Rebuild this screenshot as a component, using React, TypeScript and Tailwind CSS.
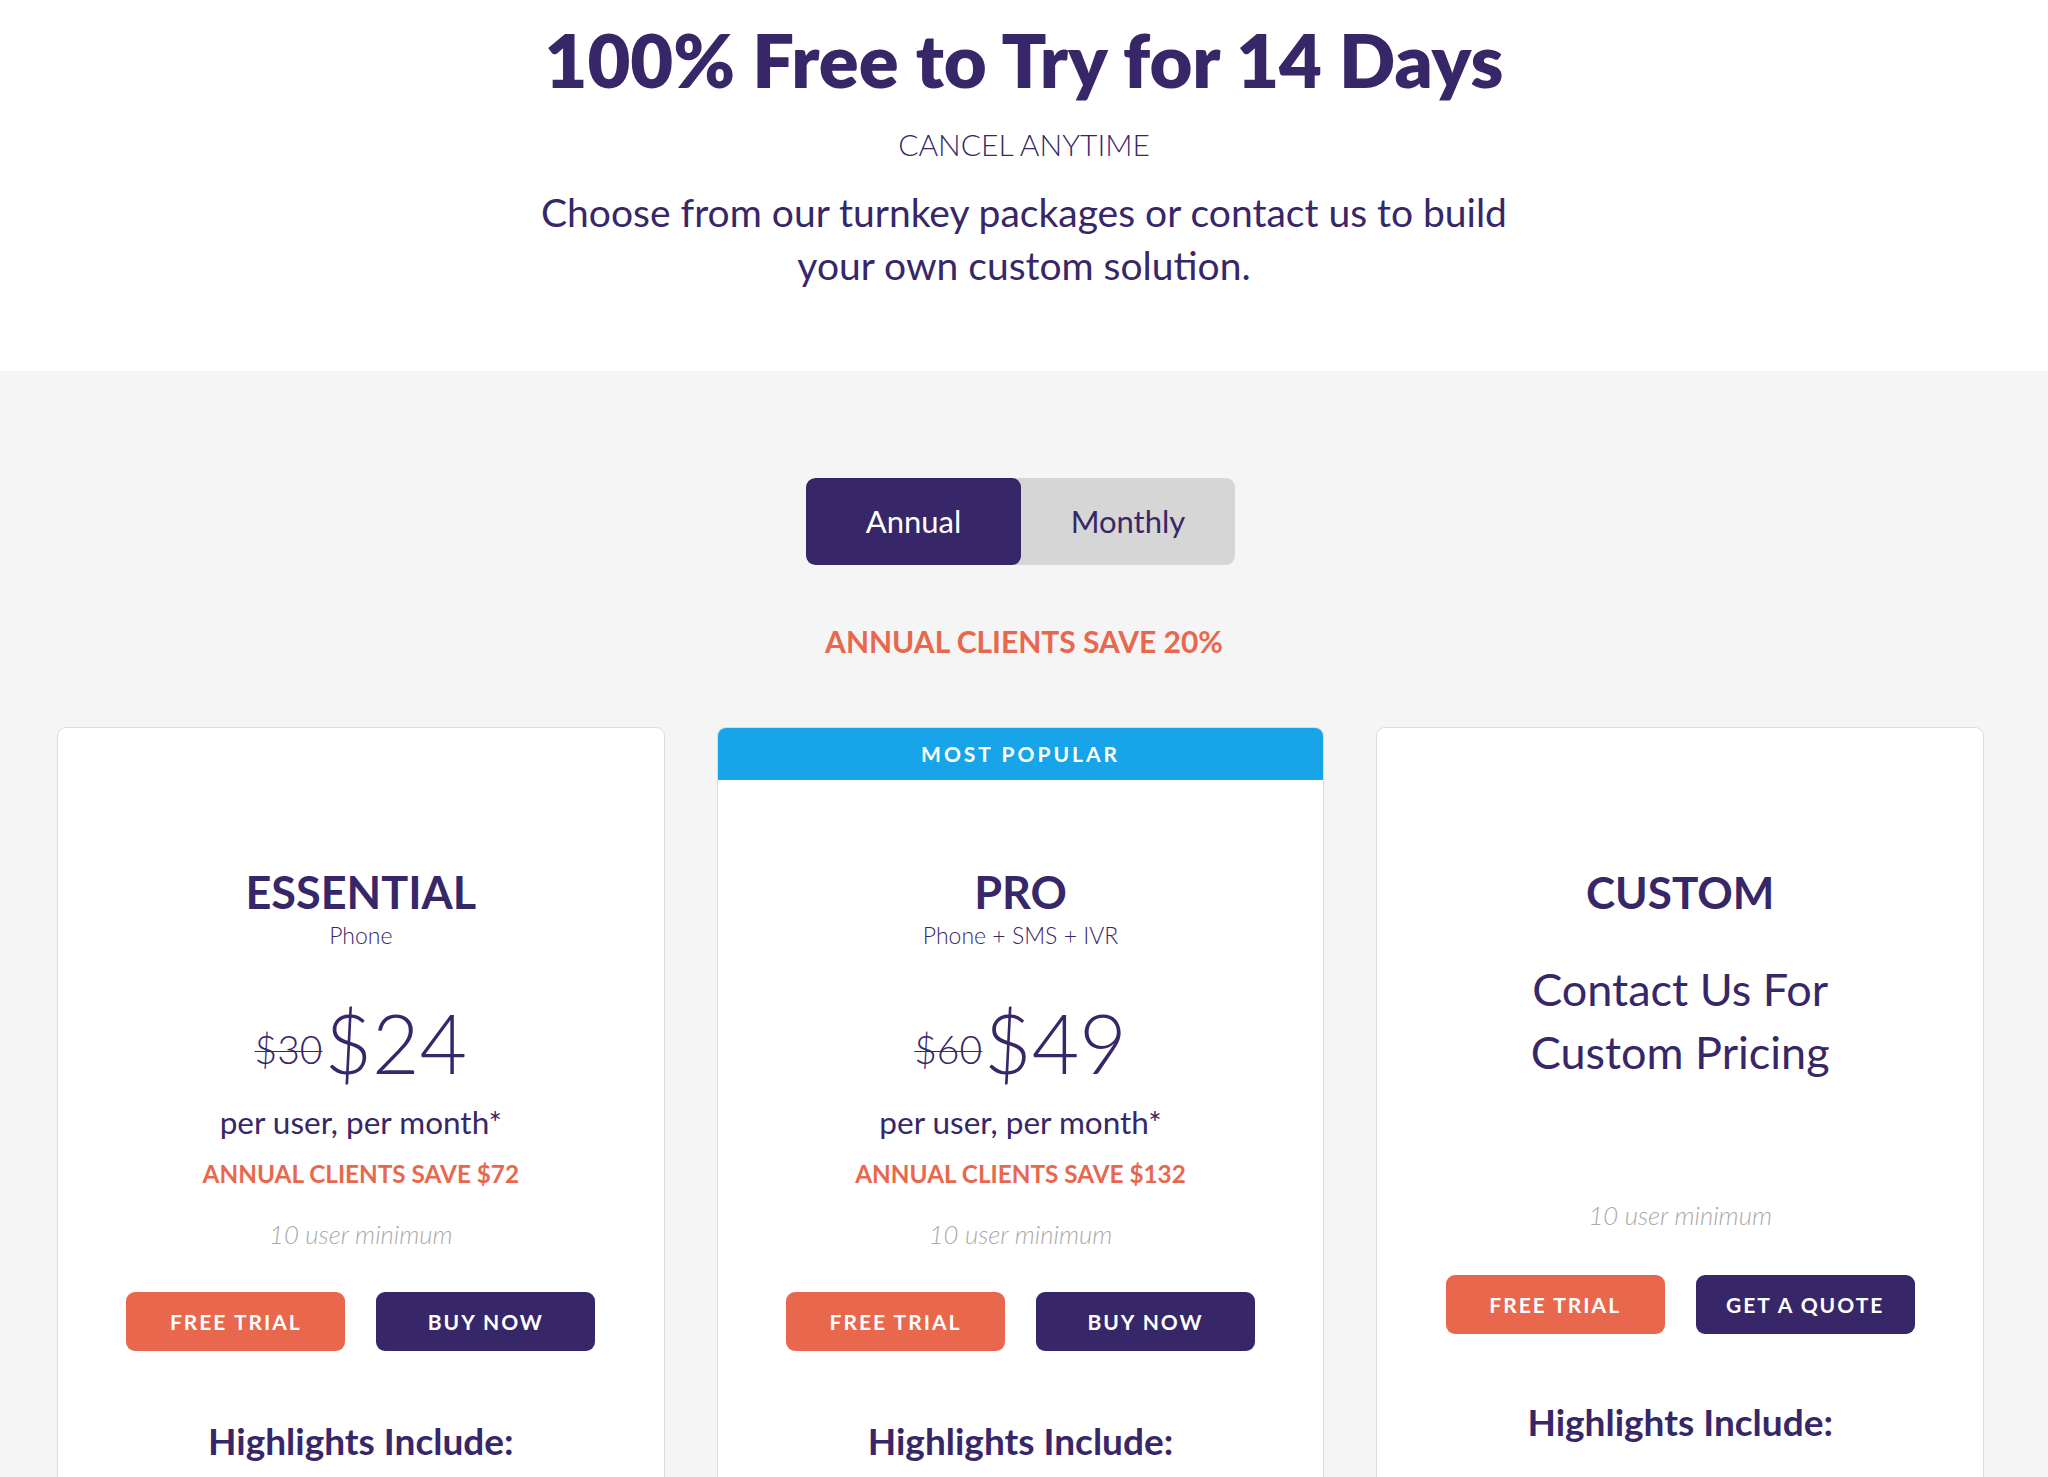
import React from "react";

const F = { fontFamily: "Lato, 'Open Sans', sans-serif" };

function Buttons({ second }: { second: string }) {
  return (
    <div className="flex gap-[31px] justify-center">
      <div className="w-[219px] h-[59px] rounded-[9px] bg-[#e8674d] text-white font-bold text-[21px] tracking-[2px] flex items-center justify-center">
        FREE TRIAL
      </div>
      <div className="w-[219px] h-[59px] rounded-[9px] bg-[#372768] text-white font-bold text-[21px] tracking-[2px] flex items-center justify-center">
        {second}
      </div>
    </div>
  );
}

function PriceCard({
  name,
  sub,
  old,
  price,
  save,
  popular,
}: {
  name: string;
  sub: string;
  old: string;
  price: string;
  save: string;
  popular?: boolean;
}) {
  return (
    <div className="flex-1 bg-white border border-[#dcdcdc] rounded-[9px] overflow-hidden flex flex-col items-center pb-[300px]">
      {popular ? (
        <div className="w-full h-[52px] bg-[#17a4e9] text-white font-bold text-[21px] tracking-[3px] flex items-center justify-center">
          MOST POPULAR
        </div>
      ) : (
        <div className="w-full h-[52px]" />
      )}
      <div className="mt-[84px] h-[56px] leading-[56px] text-[45px] font-bold text-[#372768]">{name}</div>
      <div className="h-[30px] leading-[30px] text-[23px] font-light text-[#372768]">{sub}</div>
      <div className="mt-[42px] h-[100px] flex items-center justify-center gap-[2px] text-[#372768] font-light">
        <span className="text-[39px] line-through decoration-1 mt-[14px]">{old}</span>
        <span className="text-[82px] leading-[100px]">{price}</span>
      </div>
      <div className="mt-[10px] h-[40px] leading-[40px] text-[31.5px] text-[#372768]">per user, per month*</div>
      <div className="mt-[16px] h-[32px] leading-[32px] text-[24.3px] font-bold text-[#e8674d]">{save}</div>
      <div className="mt-[28px] h-[32px] leading-[32px] text-[25.7px] font-light italic text-[#aaaaaa]">10 user minimum</div>
      <div className="mt-[42px]">
        <Buttons second="BUY NOW" />
      </div>
      <div className="mt-[65px] h-[50px] leading-[50px] text-[37px] font-bold text-[#372768]">Highlights Include:</div>
    </div>
  );
}

function CustomCard() {
  return (
    <div className="flex-1 bg-white border border-[#dcdcdc] rounded-[9px] overflow-hidden flex flex-col items-center pb-[300px]">
      <div className="w-full h-[52px]" />
      <div className="mt-[84px] h-[56px] leading-[56px] text-[44px] font-bold text-[#372768]">CUSTOM</div>
      <div className="mt-[38px] text-[45px] leading-[63px] text-[#372768] text-center">
        Contact Us For
        <br />
        Custom Pricing
      </div>
      <div className="mt-[115px] h-[32px] leading-[32px] text-[25.7px] font-light italic text-[#aaaaaa]">10 user minimum</div>
      <div className="mt-[44px]">
        <Buttons second="GET A QUOTE" />
      </div>
      <div className="mt-[63px] h-[50px] leading-[50px] text-[37px] font-bold text-[#372768]">Highlights Include:</div>
    </div>
  );
}

export default function App() {
  return (
    <div style={F} className="w-full min-h-screen bg-[#f5f5f5]">
      <div className="bg-white h-[371px] flex flex-col items-center pt-[20px] text-[#372768]">
        <div className="h-[80px] leading-[80px] text-[74px] font-extrabold">100% Free to Try for 14 Days</div>
        <div className="mt-[24px] h-[40px] leading-[40px] text-[30px] font-light">CANCEL ANYTIME</div>
        <div className="mt-[22px] text-[39px] leading-[53px] text-center">
          Choose from our turnkey packages or contact us to build
          <br />
          your own custom solution.
        </div>
      </div>
      <div className="flex flex-col items-center pt-[107px]">
        <div className="pr-[7px]">
          <div className="flex w-[429px] h-[87px] rounded-[9px] bg-[#d6d6d6] overflow-hidden">
            <div className="w-[215px] h-full bg-[#372768] rounded-[9px] text-white text-[31px] flex items-center justify-center">
              Annual
            </div>
            <div className="flex-1 h-full text-[#372768] text-[31px] flex items-center justify-center">Monthly</div>
          </div>
        </div>
        <div className="mt-[56px] h-[40px] leading-[40px] text-[30px] font-bold text-[#e8674d]">ANNUAL CLIENTS SAVE 20%</div>
        <div className="mt-[66px] w-full pl-[57px] pr-[64px] flex gap-[52px]">
          <PriceCard name="ESSENTIAL" sub="Phone" old="$30" price="$24" save="ANNUAL CLIENTS SAVE $72" />
          <PriceCard name="PRO" sub="Phone + SMS + IVR" old="$60" price="$49" save="ANNUAL CLIENTS SAVE $132" popular />
          <CustomCard />
        </div>
      </div>
    </div>
  );
}
